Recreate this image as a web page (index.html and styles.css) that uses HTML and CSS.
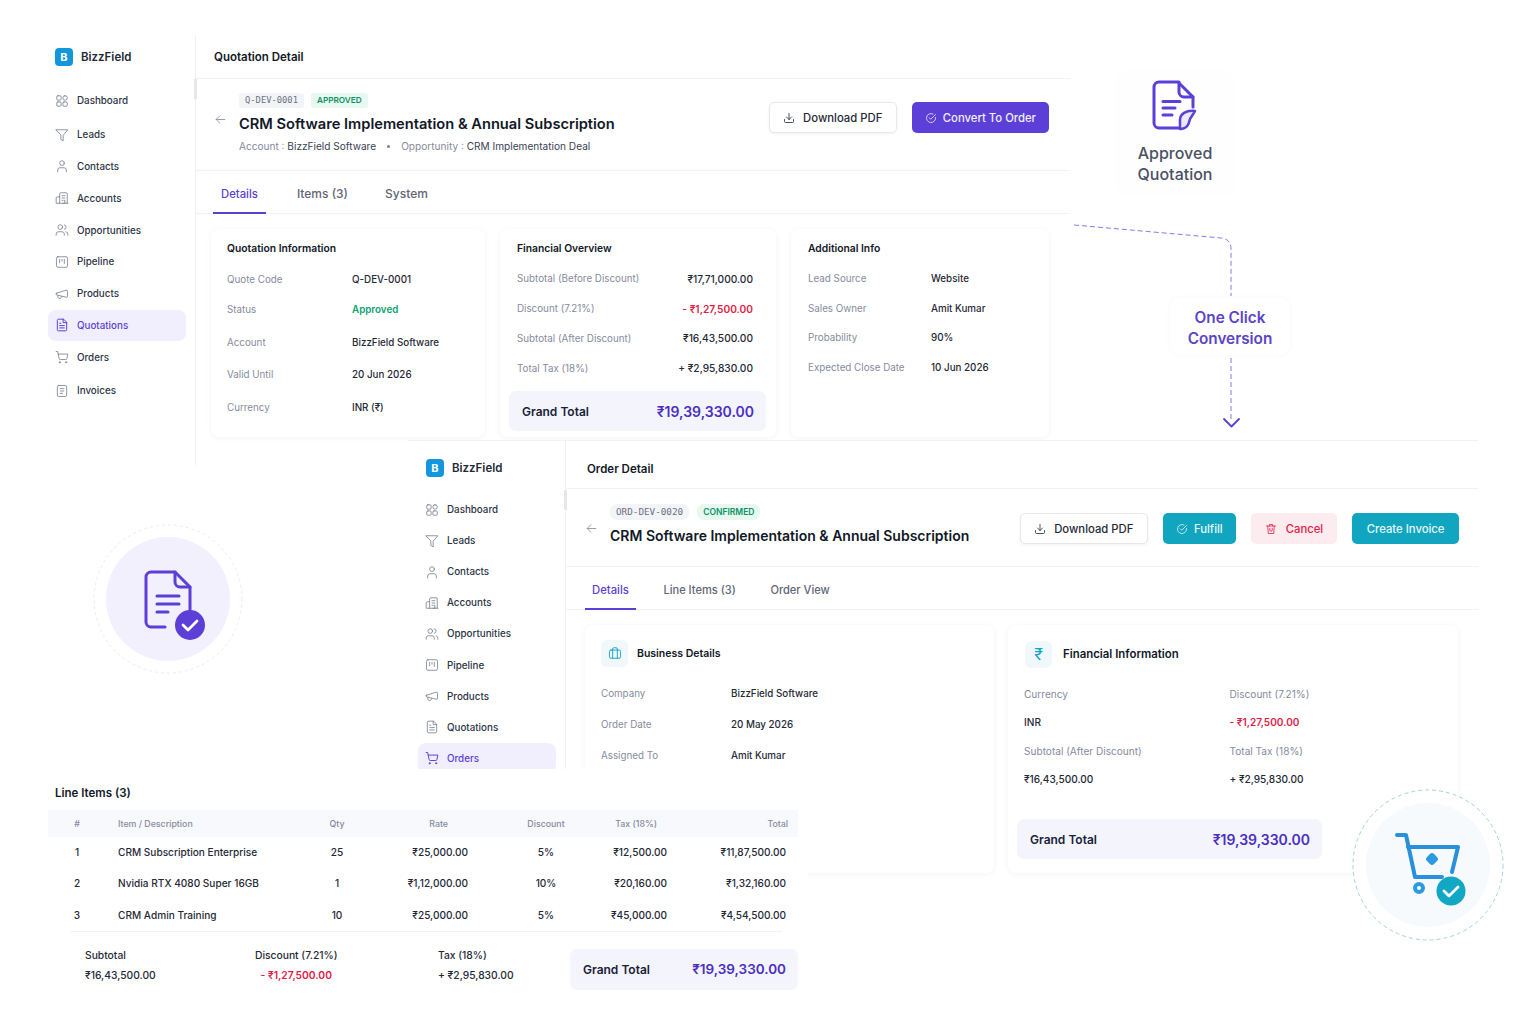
FILE: index.html
```html
<!DOCTYPE html>
<html lang="en">
<head>
    <meta charset="UTF-8">
    <title>BizzField - Quotation to Order</title>
    <link rel="stylesheet" href="styles.css">
</head>
<body>
    <svg class="icon-defs" width="0" height="0">
        <symbol id="i-dashboard" viewBox="0 0 24 24"><rect x="3" y="3" width="7.500" height="7.500" rx="2"/><rect x="13.500" y="3" width="7.500" height="7.500" rx="3.500"/><rect x="3" y="13.500" width="7.500" height="7.500" rx="2"/><rect x="13.500" y="13.500" width="7.500" height="7.500" rx="2"/></symbol>
        <symbol id="i-funnel" viewBox="0 0 24 24"><path d="M2 3h20l-8 9.500V22l-4-2.500v-7z"/></symbol>
        <symbol id="i-user" viewBox="0 0 24 24"><circle cx="12" cy="7" r="4"/><path d="M4.500 22v-3a4 4 0 0 1 4-4h7a4 4 0 0 1 4 4v3"/></symbol>
        <symbol id="i-building" viewBox="0 0 24 24"><path d="M8 21V5a2 2 0 0 1 2-2h9a2 2 0 0 1 2 2v16"/><path d="M8 10H4a2 2 0 0 0-2 2v9h20"/><path d="M12 8h5M12 12h5M12 16h1.500M15.500 16H17v5h-3"/></symbol>
        <symbol id="i-users" viewBox="0 0 24 24"><circle cx="9" cy="7" r="4"/><path d="M2 21v-2a4 4 0 0 1 4-4h6a4 4 0 0 1 4 4v2"/><path d="M16 3.100a4 4 0 0 1 0 7.800M22 21v-2a4 4 0 0 0-3-3.900"/></symbol>
        <symbol id="i-pipeline" viewBox="0 0 24 24"><rect x="2.500" y="3" width="19" height="18" rx="2.500"/><path d="M8 7.500v6M12 7.500v3M16 7.500v7"/></symbol>
        <symbol id="i-megaphone" viewBox="0 0 24 24"><path d="M3 10.500 19 5.500a2 2 0 0 1 2.500 2v8a2 2 0 0 1-2.500 2L3 13.500a1.500 1.500 0 0 1 0-3z"/><path d="M11.500 16.500a3.500 3.500 0 1 1-6.500-2"/></symbol>
        <symbol id="i-file" viewBox="0 0 24 24"><path d="M14 2H6a2 2 0 0 0-2 2v16a2 2 0 0 0 2 2h12a2 2 0 0 0 2-2V8z"/><path d="M14 2v6h6M8 13h8M8 17h8M8 9h2"/></symbol>
        <symbol id="i-cart" viewBox="0 0 24 24"><circle cx="8" cy="21" r="1"/><circle cx="19" cy="21" r="1"/><path d="M2 2.500h2.500l2.600 12.200a2 2 0 0 0 2 1.600h9.300a2 2 0 0 0 2-1.600L22 7H5.500"/></symbol>
        <symbol id="i-invoice" viewBox="0 0 24 24"><rect x="4" y="2.500" width="16" height="19" rx="2.500"/><path d="M9 8h6M9 12h6M9 16h4"/></symbol>
        <symbol id="i-arrow" viewBox="0 0 24 24"><path d="M20 12H4M11 5l-7 7 7 7"/></symbol>
        <symbol id="i-download" viewBox="0 0 24 24"><path d="M3 15v4a2 2 0 0 0 2 2h14a2 2 0 0 0 2-2v-4"/><path d="M7 10l5 5 5-5M12 15V3"/></symbol>
        <symbol id="i-convert" viewBox="0 0 24 24"><path d="M21 11v1a9 9 0 1 1-5-8"/><path d="M8.500 11.500l3 3L21 5"/></symbol>
        <symbol id="i-trash" viewBox="0 0 24 24"><path d="M3 6h18M9 6V3h6v3M5.500 6l1 15h11l1-15"/><path d="M9.500 11v3a2.500 2.500 0 0 0 5 0v-3"/></symbol>
        <symbol id="i-case" viewBox="0 0 24 24"><rect x="2.500" y="7" width="19" height="14" rx="2.500"/><path d="M8 7v14M16 7v14M8 7V5a2 2 0 0 1 2-2h4a2 2 0 0 1 2 2v2"/></symbol>
    </svg>

    <div class="canvas">
        <!-- quotation window -->
        <section class="window quote-window">
            <aside class="sidebar">
                <div class="brand"><span class="brand-logo">B</span>BizzField</div>
                <nav class="nav">
                    <a class="nav-item"><svg class="ico"><use href="#i-dashboard"/></svg>Dashboard</a>
                    <a class="nav-item"><svg class="ico"><use href="#i-funnel"/></svg>Leads</a>
                    <a class="nav-item"><svg class="ico"><use href="#i-user"/></svg>Contacts</a>
                    <a class="nav-item"><svg class="ico"><use href="#i-building"/></svg>Accounts</a>
                    <a class="nav-item"><svg class="ico"><use href="#i-users"/></svg>Opportunities</a>
                    <a class="nav-item"><svg class="ico"><use href="#i-pipeline"/></svg>Pipeline</a>
                    <a class="nav-item"><svg class="ico"><use href="#i-megaphone"/></svg>Products</a>
                    <a class="nav-item active"><svg class="ico"><use href="#i-file"/></svg>Quotations</a>
                    <a class="nav-item"><svg class="ico"><use href="#i-cart"/></svg>Orders</a>
                    <a class="nav-item"><svg class="ico"><use href="#i-invoice"/></svg>Invoices</a>
                </nav>
            </aside>
            <div class="main">
                <header class="page-header">Quotation Detail</header>
                <div class="record-head">
                    <svg class="ico back"><use href="#i-arrow"/></svg>
                    <div class="record-info">
                        <div class="badges">
                            <span class="badge badge-code">Q-DEV-0001</span>
                            <span class="badge badge-ok">APPROVED</span>
                        </div>
                        <h1 class="record-title">CRM Software Implementation &amp; Annual Subscription</h1>
                        <div class="record-meta">
                            <span><em>Account :</em> BizzField Software</span>
                            <i class="dot"></i>
                            <span><em>Opportunity :</em> CRM Implementation Deal</span>
                        </div>
                    </div>
                    <div class="actions">
                        <button class="btn btn-plain"><svg class="ico"><use href="#i-download"/></svg>Download PDF</button>
                        <button class="btn btn-purple"><svg class="ico"><use href="#i-convert"/></svg>Convert To Order</button>
                    </div>
                </div>
                <div class="tabs">
                    <a class="tab active">Details</a>
                    <a class="tab">Items (3)</a>
                    <a class="tab">System</a>
                </div>
                <div class="cards">
                    <div class="card">
                        <h2 class="card-title">Quotation Information</h2>
                        <div class="info-row"><span class="lbl">Quote Code</span><span>Q-DEV-0001</span></div>
                        <div class="info-row"><span class="lbl">Status</span><span class="green">Approved</span></div>
                        <div class="info-row tall first-tall"><span class="lbl">Account</span><span>BizzField Software</span></div>
                        <div class="info-row tall"><span class="lbl">Valid Until</span><span>20 Jun 2026</span></div>
                        <div class="info-row tall"><span class="lbl">Currency</span><span>INR (₹)</span></div>
                    </div>
                    <div class="card card-money">
                        <h2 class="card-title">Financial Overview</h2>
                        <div class="money-row"><span class="lbl">Subtotal (Before Discount)</span><span>₹17,71,000.00</span></div>
                        <div class="money-row"><span class="lbl">Discount (7.21%)</span><span class="red">- ₹1,27,500.00</span></div>
                        <div class="money-row"><span class="lbl">Subtotal (After Discount)</span><span>₹16,43,500.00</span></div>
                        <div class="money-row"><span class="lbl">Total Tax (18%)</span><span>+ ₹2,95,830.00</span></div>
                        <div class="grand"><span>Grand Total</span><strong>₹19,39,330.00</strong></div>
                    </div>
                    <div class="card card-extra">
                        <h2 class="card-title">Additional Info</h2>
                        <div class="info-row"><span class="lbl">Lead Source</span><span>Website</span></div>
                        <div class="info-row"><span class="lbl">Sales Owner</span><span>Amit Kumar</span></div>
                        <div class="info-row"><span class="lbl">Probability</span><span>90%</span></div>
                        <div class="info-row"><span class="lbl">Expected Close Date</span><span>10 Jun 2026</span></div>
                    </div>
                </div>
            </div>
        </section>

        <!-- order window -->
        <section class="window order-window">
            <aside class="sidebar">
                <div class="brand"><span class="brand-logo">B</span>BizzField</div>
                <nav class="nav">
                    <a class="nav-item"><svg class="ico"><use href="#i-dashboard"/></svg>Dashboard</a>
                    <a class="nav-item"><svg class="ico"><use href="#i-funnel"/></svg>Leads</a>
                    <a class="nav-item"><svg class="ico"><use href="#i-user"/></svg>Contacts</a>
                    <a class="nav-item"><svg class="ico"><use href="#i-building"/></svg>Accounts</a>
                    <a class="nav-item"><svg class="ico"><use href="#i-users"/></svg>Opportunities</a>
                    <a class="nav-item"><svg class="ico"><use href="#i-pipeline"/></svg>Pipeline</a>
                    <a class="nav-item"><svg class="ico"><use href="#i-megaphone"/></svg>Products</a>
                    <a class="nav-item"><svg class="ico"><use href="#i-file"/></svg>Quotations</a>
                    <a class="nav-item active"><svg class="ico"><use href="#i-cart"/></svg>Orders</a>
                </nav>
            </aside>
            <div class="main">
                <header class="page-header">Order Detail</header>
                <div class="record-head">
                    <svg class="ico back"><use href="#i-arrow"/></svg>
                    <div class="record-info">
                        <div class="badges">
                            <span class="badge badge-code">ORD-DEV-0020</span>
                            <span class="badge badge-ok">CONFIRMED</span>
                        </div>
                        <h1 class="record-title">CRM Software Implementation &amp; Annual Subscription</h1>
                    </div>
                    <div class="actions">
                        <button class="btn btn-plain"><svg class="ico"><use href="#i-download"/></svg>Download PDF</button>
                        <button class="btn btn-teal"><svg class="ico"><use href="#i-convert"/></svg>Fulfill</button>
                        <button class="btn btn-red"><svg class="ico"><use href="#i-trash"/></svg>Cancel</button>
                        <button class="btn btn-teal">Create Invoice</button>
                    </div>
                </div>
                <div class="tabs">
                    <a class="tab active">Details</a>
                    <a class="tab">Line Items (3)</a>
                    <a class="tab">Order View</a>
                </div>
                <div class="cards">
                    <div class="card">
                        <div class="card-head">
                            <span class="card-icon"><svg class="ico"><use href="#i-case"/></svg></span>
                            <h2 class="card-title">Business Details</h2>
                        </div>
                        <div class="info-row"><span class="lbl">Company</span><span>BizzField Software</span></div>
                        <div class="info-row"><span class="lbl">Order Date</span><span>20 May 2026</span></div>
                        <div class="info-row"><span class="lbl">Assigned To</span><span>Amit Kumar</span></div>
                    </div>
                    <div class="card card-fin">
                        <div class="card-head">
                            <span class="card-icon rupee">₹</span>
                            <h2 class="card-title">Financial Information</h2>
                        </div>
                        <div class="fin-grid">
                            <span class="lbl">Currency</span><span class="lbl">Discount (7.21%)</span>
                            <span>INR</span><span class="red">- ₹1,27,500.00</span>
                            <span class="lbl">Subtotal (After Discount)</span><span class="lbl">Total Tax (18%)</span>
                            <span>₹16,43,500.00</span><span>+ ₹2,95,830.00</span>
                        </div>
                        <div class="grand"><span>Grand Total</span><strong>₹19,39,330.00</strong></div>
                    </div>
                </div>
            </div>
        </section>

        <!-- line items panel -->
        <section class="items-panel">
            <h2 class="items-title">Line Items (3)</h2>
            <div class="items-row items-head">
                <span class="c-num">#</span><span class="c-item">Item / Description</span><span class="c-mid">Qty</span>
                <span class="c-right h-rate">Rate</span><span class="c-disc">Discount</span>
                <span class="c-right h-tax">Tax (18%)</span><span class="c-right">Total</span>
            </div>
            <div class="items-row">
                <span class="c-num">1</span><span class="c-item">CRM Subscription Enterprise</span><span class="c-mid">25</span>
                <span class="c-right">₹25,000.00</span><span class="c-disc">5%</span>
                <span class="c-right">₹12,500.00</span><span class="c-right">₹11,87,500.00</span>
            </div>
            <div class="items-row">
                <span class="c-num">2</span><span class="c-item">Nvidia RTX 4080 Super 16GB</span><span class="c-mid">1</span>
                <span class="c-right">₹1,12,000.00</span><span class="c-disc">10%</span>
                <span class="c-right">₹20,160.00</span><span class="c-right">₹1,32,160.00</span>
            </div>
            <div class="items-row">
                <span class="c-num">3</span><span class="c-item">CRM Admin Training</span><span class="c-mid">10</span>
                <span class="c-right">₹25,000.00</span><span class="c-disc">5%</span>
                <span class="c-right">₹45,000.00</span><span class="c-right">₹4,54,500.00</span>
            </div>
            <div class="items-rule"></div>
            <div class="items-summary">
                <div class="sum"><b>Subtotal</b><span>₹16,43,500.00</span></div>
                <div class="sum sum-center"><b>Discount (7.21%)</b><span class="red">- ₹1,27,500.00</span></div>
                <div class="sum"><b>Tax (18%)</b><span>+ ₹2,95,830.00</span></div>
                <div class="grand"><span>Grand Total</span><strong>₹19,39,330.00</strong></div>
            </div>
        </section>

        <!-- callouts around the windows -->
        <svg class="connector" viewBox="0 0 1536 1024">
            <path class="dash" d="M1074 225 L1221 238 Q1231 239 1231 249 V296"/>
            <path class="dash" d="M1231 358 V422"/>
            <path class="tip" d="M1224 419 L1231.500 426.500 L1239 419"/>
        </svg>

        <div class="callout approved">
            <svg class="approved-icon" viewBox="0 0 46 52">
                <path d="M27 48H7a5 5 0 0 1-5-5V7a5 5 0 0 1 5-5h19l15 15v10"/>
                <path d="M27 2v10a5 5 0 0 0 5 5h9"/>
                <path d="M11 21.500h17M11 28h12M11 35h9"/>
                <path class="leaf" d="M43 31c-9-1-15 3-15 9v9c8 0 9-6 10-10z"/>
            </svg>
            <span>Approved<br>Quotation</span>
        </div>
        <div class="callout oneclick">One Click<br>Conversion</div>

        <svg class="badge-art doc-art" viewBox="0 0 150 150">
            <circle class="ring" cx="75" cy="75" r="74"/>
            <circle cx="75" cy="75" r="62" fill="#f2f0fd"/>
            <path class="art-line" d="M72 103H58a5 5 0 0 1-5-5V53a5 5 0 0 1 5-5h24l15 15v25"/>
            <path class="art-line" d="M82 48v10a5 5 0 0 0 5 5h10"/>
            <path class="art-line" d="M64 72h22M64 80h22M64 88h11"/>
            <circle cx="97" cy="101" r="15" fill="#5b3fd6"/>
            <path class="art-check" d="M90 101l5 5 9-9"/>
        </svg>

        <svg class="badge-art cart-art" viewBox="0 0 152 152">
            <circle class="ring ring-teal" cx="76" cy="76" r="75"/>
            <circle cx="76" cy="76" r="62" fill="#f6fafc"/>
            <path class="cart-line" d="M45 46h9l9 42h27"/>
            <path class="cart-line" d="M56 58h50l-6 25"/>
            <rect x="75" y="65" width="10" height="10" rx="3" transform="rotate(45 80 70)" fill="#2b9be0"/>
            <circle cx="67" cy="99" r="4" fill="#fff" stroke="#2b9be0" stroke-width="4"/>
            <circle cx="99" cy="102" r="14.500" fill="#12a8c4"/>
            <path class="art-check" d="M92 102l5 5 9-9"/>
        </svg>
    </div>
</body>
</html>
```

FILE: styles.css
```css
:root {
    --purple: #5b3fd6;
    --purple-soft: #f1effd;
    --teal: #12a5bf;
    --red: #e11d48;
    --green: #0f9f6e;
    --ink: #111827;
    --muted: #868b9e;
    --line: #f1f2f5;
}

* {
    margin: 0;
    padding: 0;
    box-sizing: border-box;
}

body {
    font-family: Inter, "Noto Sans", sans-serif;
    background: #fff;
    color: #1f2937;
    font-size: 9.800px;
}

em {
    font-style: normal;
    color: var(--muted);
}

.icon-defs {
    position: absolute;
}

.canvas {
    position: relative;
    width: 1536px;
    height: 1024px;
    overflow: hidden;
}

.ico {
    width: 14px;
    height: 14px;
    flex: none;
    fill: none;
    stroke: currentColor;
    stroke-width: 1.6;
    stroke-linecap: round;
    stroke-linejoin: round;
}

/* windows */
.window {
    position: absolute;
    display: flex;
    background: #fff;
}

.quote-window {
    left: 40px;
    top: 35px;
    width: 1030px;
    height: 405px;
}

.order-window {
    left: 408px;
    top: 441px;
    width: 1070px;
    height: 440px;
    box-shadow: 0 -1px 0 var(--line);
}

/* sidebar */
.sidebar {
    position: relative;
    flex: none;
    width: 156px;
    border-right: 1px solid #eff0f3;
    padding: 13px 9px 0 8px;
}

/* scroll thumb on the sidebar edge */
.sidebar::after {
    content: "";
    position: absolute;
    right: -2px;
    top: 44px;
    width: 3px;
    height: 20px;
    background: #e6e7eb;
}

.order-window .sidebar::after {
    top: 49px;
}

.quote-window .sidebar {
    height: 430px;
    background: #fff;
}

.order-window .sidebar {
    width: 158px;
    padding: 18px 9px 0 10px;
}

.brand {
    display: flex;
    align-items: center;
    gap: 8px;
    height: 18px;
    padding-left: 7px;
    font-size: 11.500px;
    font-weight: 600;
    color: #1f2937;
}

.order-window .brand {
    padding-left: 8px;
}

.brand-logo {
    width: 18px;
    height: 18px;
    border-radius: 4px;
    background: #1496dc;
    color: #fff;
    font-size: 11px;
    font-weight: 700;
    text-align: center;
    line-height: 18px;
}

.nav {
    display: flex;
    flex-direction: column;
    margin-top: 19px;
}

.order-window .nav {
    margin-top: 17px;
}

.nav-item {
    display: flex;
    align-items: center;
    gap: 8px;
    height: 31.800px;
    padding-left: 7px;
    font-weight: 500;
    color: #2b3445;
    border-radius: 8px;
}

.quote-window .nav-item:first-child {
    margin-bottom: 2px;
}

.quote-window .nav-item:last-child {
    margin-top: 1.500px;
}

.order-window .nav-item {
    height: 31.100px;
}

.nav-item .ico {
    color: #6f7686;
    stroke-width: 1.3;
}

.nav-item.active {
    background: var(--purple-soft);
    color: var(--purple);
}

.nav-item.active .ico {
    color: var(--purple);
    stroke-width: 1.7;
}

/* main column */
.main {
    flex: 1;
    min-width: 0;
    display: flex;
    flex-direction: column;
}

.page-header {
    height: 44px;
    display: flex;
    align-items: center;
    padding: 1px 0 0 18px;
    font-size: 11.500px;
    font-weight: 600;
    color: var(--ink);
    border-bottom: 1px solid var(--line);
}

.order-window .page-header {
    height: 48px;
    padding: 8px 0 0 21px;
}

.record-head {
    display: flex;
    align-items: center;
    height: 92px;
    padding: 0 21px 0 18px;
    border-bottom: 1px solid var(--line);
}

.order-window .record-head {
    height: 78px;
    padding: 0 19px;
}

.back {
    color: #8a90a0;
    width: 13px;
    height: 13px;
    margin-right: 12px;
    position: relative;
    top: -5px;
}

.order-window .back {
    margin-right: 12px;
    top: 1px;
}

.record-info {
    flex: 1;
    min-width: 0;
    margin-top: -4px;
}

.order-window .record-info {
    margin-top: -6px;
}

.badges {
    display: flex;
    gap: 7px;
}

.order-window .badges {
    gap: 8px;
}

.badge {
    height: 15px;
    padding: 0 6px;
    border-radius: 3px;
    font-size: 8.200px;
    font-weight: 600;
    line-height: 15px;
}

.badge-code {
    background: #f3f4f7;
    color: #6a7185;
    font-family: "DejaVu Sans Mono", "Liberation Mono", monospace;
    font-size: 8.800px;
    font-weight: 400;
}

.badge-ok {
    background: #e6f8f0;
    color: #0d9263;
}

.order-window .badge {
    height: 16px;
    border-radius: 7px;
    line-height: 16px;
}

.order-window .badge-ok {
    font-size: 8.500px;
}

.order-window .badge-code {
    font-size: 9.300px;
}

.record-title {
    margin-top: 7px;
    font-size: 14.650px;
    line-height: 18px;
    font-weight: 600;
    color: var(--ink);
    white-space: nowrap;
}

.order-window .record-title {
    font-size: 14px;
}

.record-meta {
    display: flex;
    align-items: center;
    gap: 11px;
    margin-top: 7px;
    font-size: 10.100px;
    line-height: 12px;
    color: #3b4354;
}

.dot {
    width: 3px;
    height: 3px;
    border-radius: 50%;
    background: #7b8194;
}

.actions {
    display: flex;
    gap: 15px;
    margin-top: -14px;
}

.order-window .actions {
    margin-top: 2px;
}

.btn {
    display: flex;
    align-items: center;
    gap: 6px;
    height: 31px;
    padding: 0 12px;
    border: 1px solid transparent;
    border-radius: 5px;
    font-family: inherit;
    font-size: 11.300px;
    font-weight: 500;
    cursor: pointer;
}

.btn .ico {
    width: 12px;
    height: 12px;
}

.btn-plain {
    gap: 8px;
    padding: 0 13.500px;
    background: #fff;
    border-color: #e6e8ec;
    color: #1f2937;
    box-shadow: 0 1px 3px rgba(20, 30, 60, 0.06);
}

.btn-purple {
    background: var(--purple);
    color: #f1effd;
}

.btn-teal {
    background: var(--teal);
    color: #e6f8fb;
}

.order-window .btn:last-child {
    padding: 0 13.500px;
}

.btn-red {
    gap: 9px;
    padding: 0 13px;
    background: #fdecef;
    color: var(--red);
}

.tabs {
    display: flex;
    gap: 21px;
    height: 43px;
    padding-left: 17px;
    border-bottom: 1px solid var(--line);
}

.tab {
    display: flex;
    align-items: center;
    padding: 4px 8px 0;
    margin-bottom: -1px;
    border-bottom: 2px solid transparent;
    font-size: 12px;
    font-weight: 500;
    color: #5f6678;
}

.tab.active {
    margin-right: 2px;
    font-size: 11.300px;
    color: var(--purple);
    border-color: var(--purple);
}

.order-window .tabs {
    gap: 20.500px;
    padding-left: 19px;
}

.order-window .tab {
    padding: 4px 7px 0;
    font-size: 11.100px;
}

.order-window .tab.active {
    margin-right: 0;
    font-size: 11.300px;
}

/* cards */
.cards {
    display: grid;
    grid-template-columns: 274px 276px 258px;
    gap: 15px;
    padding: 15px 0 0 15px;
}

.order-window .cards {
    grid-template-columns: 409px 450px;
    gap: 14px;
    padding: 15px 0 0 19px;
}

.card {
    height: 208px;
    padding: 13px 16px 0;
    background: #fff;
    border-radius: 8px;
    box-shadow: 0 1px 6px rgba(30, 40, 80, 0.05);
}

.order-window .card {
    height: 248px;
    padding-top: 15px;
}

.card-money {
    padding: 13px 23px 0 17px;
}

.card-extra {
    padding-left: 17px;
}

.card-title {
    height: 13px;
    margin-bottom: 9px;
    font-size: 10.300px;
    font-weight: 600;
    line-height: 13px;
    color: var(--ink);
}

.card-head {
    display: flex;
    align-items: center;
    gap: 9px;
    height: 26px;
    margin-bottom: 12px;
}

.card-head .card-title {
    margin: 0;
    font-size: 10.500px;
}

.card-icon {
    width: 27px;
    height: 27px;
    border-radius: 6px;
    background: #f0f8fb;
    color: var(--teal);
    display: flex;
    align-items: center;
    justify-content: center;
    font-size: 16px;
}

.info-row {
    display: grid;
    grid-template-columns: 125px 1fr;
    align-items: center;
    height: 30px;
    font-weight: 500;
}

.info-row.tall {
    height: 32.500px;
}

.info-row.first-tall {
    margin-top: 2px;
}

.card-extra .info-row {
    grid-template-columns: 123px 1fr;
    height: 29.500px;
}

.order-window .info-row {
    grid-template-columns: 130px 1fr;
    height: 31px;
}

.lbl {
    color: var(--muted);
    font-weight: 400;
}

.green {
    color: var(--green);
    font-weight: 600;
}

.red {
    color: var(--red);
    font-weight: 600;
}

.money-row {
    display: flex;
    justify-content: space-between;
    align-items: center;
    height: 29.800px;
    font-weight: 500;
}

.money-row span:last-child {
    font-size: 10.200px;
}

.grand {
    display: flex;
    justify-content: space-between;
    align-items: center;
    height: 40px;
    padding: 0 12px 0 13px;
    border-radius: 7px;
    background: #f3f4fc;
    font-size: 12px;
    font-weight: 600;
    color: #1a2238;
}

.grand strong {
    font-size: 14px;
    font-weight: 600;
    color: #4a2fc4;
}

.card-money .grand {
    margin: 8px -13px 0 -8px;
}

.card-fin .card-head {
    gap: 11px;
    height: 28px;
    margin-bottom: 12px;
}

.card-fin .card-icon {
    margin-left: 1px;
}

.card-fin .card-head .card-title {
    font-size: 11.400px;
}

.fin-grid {
    display: grid;
    grid-template-columns: 205.500px 1fr;
    grid-auto-rows: 28.300px;
    align-items: center;
    font-weight: 500;
}

.fin-grid span {
    font-size: 10.100px;
}

.card-fin .grand {
    width: 305px;
    margin: 26px 0 0 -7px;
}

/* line items */
.items-panel {
    position: absolute;
    left: 48px;
    top: 769px;
    width: 760px;
    height: 232px;
    background: #fff;
}

.items-title {
    height: 41px;
    padding: 17px 0 0 7px;
    font-size: 11.500px;
    font-weight: 600;
    color: var(--ink);
}

.items-row {
    display: grid;
    grid-template-columns: 58px 204px 54px 104px 132px 67px 121px;
    align-items: center;
    width: 750px;
    height: 31.500px;
    padding-right: 10px;
    font-size: 10.100px;
    font-weight: 500;
}

.items-row .c-right:last-child {
    padding-right: 2px;
}

.items-head {
    height: 27px;
    margin-bottom: -1px;
    background: #f8f9fc;
    color: var(--muted);
    font-size: 8.800px;
}

.items-head .c-right:last-child {
    padding-right: 0;
}

.c-num,
.c-mid {
    text-align: center;
}

.c-item {
    padding-left: 12px;
}

.c-right {
    text-align: right;
    white-space: nowrap;
}

.c-right:nth-child(4) {
    justify-self: end;
}

.c-disc {
    padding-left: 24px;
    text-align: center;
}

.h-rate {
    padding-right: 20px;
}

.h-tax {
    padding-right: 10px;
}

.items-rule {
    width: 712px;
    height: 1px;
    margin-left: 22px;
    background: var(--line);
}

.items-summary {
    display: grid;
    grid-template-columns: 170px 183px 132px 228px;
    width: 750px;
    padding: 17px 0 0 37px;
}

.sum {
    display: flex;
    flex-direction: column;
    align-items: flex-start;
    gap: 8px;
    justify-self: start;
    font-size: 10.300px;
    line-height: 12px;
    font-weight: 500;
}

.sum b {
    font-weight: 500;
    color: #1f2937;
}

.sum-center {
    align-items: center;
}

.items-summary .grand {
    height: 41px;
}

.items-summary .grand strong {
    font-size: 13.500px;
}

/* callouts */
.connector {
    position: absolute;
    left: 0;
    top: 0;
    width: 1536px;
    height: 1024px;
    fill: none;
    pointer-events: none;
}

.dash {
    stroke: #8a78ea;
    stroke-width: 1;
    stroke-dasharray: 5 3;
}

.tip {
    stroke: var(--purple);
    stroke-width: 1.800;
    stroke-linecap: round;
    stroke-linejoin: round;
}

.callout {
    position: absolute;
    text-align: center;
    font-size: 16px;
    line-height: 21px;
    font-weight: 500;
}

.approved {
    left: 1115px;
    top: 70px;
    width: 120px;
    height: 125px;
    padding-top: 10px;
    color: #4a5263;
    border-radius: 10px;
    background: #fefeff;
    display: flex;
    flex-direction: column;
    align-items: center;
}

.approved-icon {
    width: 46px;
    height: 52px;
    margin-bottom: 11px;
    fill: none;
    stroke: var(--purple);
    stroke-width: 3;
    stroke-linecap: round;
    stroke-linejoin: round;
}

.approved-icon .leaf {
    fill: #ece9fb;
    stroke-width: 2.500;
}

.oneclick {
    left: 1170px;
    top: 298px;
    width: 120px;
    height: 57px;
    padding-top: 9px;
    border-radius: 10px;
    background: #fff;
    box-shadow: 0 0 6px rgba(40, 40, 100, 0.03);
    color: #5a44c6;
    font-size: 15.300px;
    font-weight: 600;
}

.badge-art {
    position: absolute;
    fill: none;
}

.doc-art {
    left: 93px;
    top: 524px;
    width: 150px;
    height: 150px;
}

.cart-art {
    left: 1352px;
    top: 789px;
    width: 152px;
    height: 152px;
}

.ring {
    fill: #fff;
    stroke: #eceaf5;
    stroke-dasharray: 3 3;
}

.ring-teal {
    stroke: #9fd4dd;
    stroke-dasharray: 4 3;
}

.art-line {
    stroke: var(--purple);
    stroke-width: 3;
    stroke-linecap: round;
    stroke-linejoin: round;
}

.art-check {
    stroke: #fff;
    stroke-width: 2.800;
    stroke-linecap: round;
    stroke-linejoin: round;
}

.cart-line {
    stroke: #2b90dc;
    stroke-width: 4;
    stroke-linecap: round;
    stroke-linejoin: round;
}
```
